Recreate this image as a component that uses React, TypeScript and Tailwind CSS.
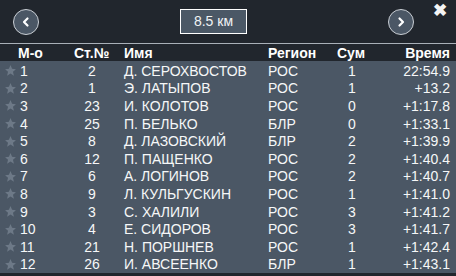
import React from 'react';

interface Row {
  place: number;
  bib: number;
  name: string;
  region: string;
  sum: number;
  time: string;
}

const rows: Row[] = [
  { place: 1, bib: 2, name: 'Д. СЕРОХВОСТОВ', region: 'РОС', sum: 1, time: '22:54.9' },
  { place: 2, bib: 1, name: 'Э. ЛАТЫПОВ', region: 'РОС', sum: 1, time: '+13.2' },
  { place: 3, bib: 23, name: 'И. КОЛОТОВ', region: 'РОС', sum: 0, time: '+1:17.8' },
  { place: 4, bib: 25, name: 'П. БЕЛЬКО', region: 'БЛР', sum: 0, time: '+1:33.1' },
  { place: 5, bib: 8, name: 'Д. ЛАЗОВСКИЙ', region: 'БЛР', sum: 2, time: '+1:39.9' },
  { place: 6, bib: 12, name: 'П. ПАЩЕНКО', region: 'РОС', sum: 2, time: '+1:40.4' },
  { place: 7, bib: 6, name: 'А. ЛОГИНОВ', region: 'РОС', sum: 2, time: '+1:40.7' },
  { place: 8, bib: 9, name: 'Л. КУЛЬГУСКИН', region: 'РОС', sum: 1, time: '+1:41.0' },
  { place: 9, bib: 3, name: 'С. ХАЛИЛИ', region: 'РОС', sum: 3, time: '+1:41.2' },
  { place: 10, bib: 4, name: 'Е. СИДОРОВ', region: 'РОС', sum: 3, time: '+1:41.7' },
  { place: 11, bib: 21, name: 'Н. ПОРШНЕВ', region: 'РОС', sum: 1, time: '+1:42.4' },
  { place: 12, bib: 26, name: 'И. АВСЕЕНКО', region: 'БЛР', sum: 1, time: '+1:43.1' },
];

const Star = () => (
  <svg width="13" height="13" viewBox="0 0 24 24" className="shrink-0">
    <path d="M12 2l2.9 6.9 7.1.6-5.4 4.7 1.7 7.3L12 17.6 5.7 21.5l1.7-7.3L2 9.5l7.1-.6z" fill="#6d7987" />
  </svg>
);

const Arrow = ({ dir }: { dir: 'left' | 'right' }) => (
  <button className="w-[26px] h-[26px] rounded-full border border-[#c9ced4] bg-[#4b5765] flex items-center justify-center">
    <svg width="12" height="12" viewBox="0 0 12 12">
      <path
        d={dir === 'left' ? 'M7.5 2.5L4 6l3.5 3.5' : 'M4.5 2.5L8 6l-3.5 3.5'}
        stroke="#fff"
        strokeWidth="2.2"
        fill="none"
        strokeLinecap="round"
        strokeLinejoin="round"
      />
    </svg>
  </button>
);

export default function App() {
  return (
    <div className="w-[456px] h-[276px] overflow-hidden bg-[#21262d] text-white" style={{ fontFamily: '"Liberation Sans", Arial, sans-serif' }}>
      <div className="h-[43px] relative flex items-center justify-between pl-[13px] pr-[42px]">
        <Arrow dir="left" />
        <div className="w-[67px] h-[25px] border border-white bg-[#4b5866] flex items-center justify-center text-[14px] text-[#f1f3f5]">
          8.5 км
        </div>
        <Arrow dir="right" />
        <span className="absolute right-[9px] top-[2px] text-[17px] font-bold leading-none text-[#f4f4f4]">✖</span>
      </div>
      <div className="h-px bg-[#a9b0b8]" />
      <div className="h-[17px] flex items-center text-[14px] font-bold leading-none">
        <span className="w-[70px] pl-[18px]">М-о</span>
        <span className="w-[54px] pl-[4px]">Ст.№</span>
        <span className="w-[144px]">Имя</span>
        <span className="w-[69px]">Регион</span>
        <span className="w-[40px]">Сум</span>
        <span className="flex-1 text-right pr-[6px]">Время</span>
      </div>
      <div className="bg-[#4b5765] pt-px">
        {rows.map((r) => (
          <div key={r.place} className="h-[17.6px] flex items-center text-[14px] leading-none text-[#f6f7f8]">
            <span className="w-[70px] flex items-center gap-[3px] pl-[4px]">
              <Star />
              {r.place}
            </span>
            <span className="w-[44px] text-center">{r.bib}</span>
            <span className="w-[154px] pl-[10px]">{r.name}</span>
            <span className="w-[69px]">{r.region}</span>
            <span className="w-[30px] text-center">{r.sum}</span>
            <span className="flex-1 text-right pr-[6px]">{r.time}</span>
          </div>
        ))}
      </div>
    </div>
  );
}
